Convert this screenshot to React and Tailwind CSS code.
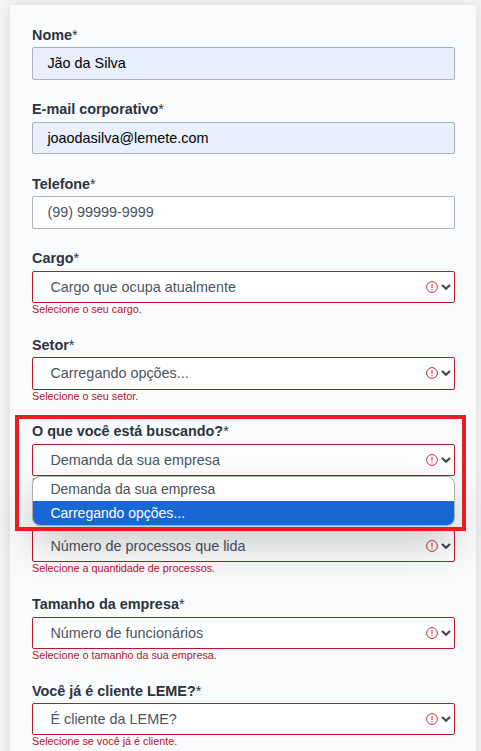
const fields = [
  { label: "Nome", value: "Jão da Silva", kind: "filled", row: "h-[75px]", head: "leading-5", box: "h-[33px]" },
  { label: "E-mail corporativo", value: "joaodasilva@lemete.com", kind: "filled", row: "h-[74px]", head: "leading-[18px]", box: "h-[32px] pt-px" },
  { label: "Telefone", value: "(99) 99999-9999", kind: "empty", row: "h-[75px]", head: "leading-5", box: "h-[33px]" },
  { label: "Cargo", value: "Cargo que ocupa atualmente", error: "Selecione o seu cargo.", row: "h-[86px]", head: "leading-[18px]", box: "h-[32px]", text: "pt-px" },
  { label: "Setor", value: "Carregando opções...", error: "Selecione o seu setor.", row: "h-[87px]", head: "leading-5", box: "h-[33px]", text: "", icons: "pb-px" },
  { label: "O que você está buscando?", value: "Demanda da sua empresa", error: "Selecione a sua demanda.", row: "h-[86px]", head: "leading-[18px]", box: "h-[32px]", text: "pt-px", open: true },
  { label: "Quantidade de processos", value: "Número de processos que lida", error: "Selecione a quantidade de processos.", row: "h-[87px]", head: "leading-5", box: "h-[32px]", text: "pt-px" },
  { label: "Tamanho da empresa", value: "Número de funcionários", error: "Selecione o tamanho da sua empresa.", row: "h-[86px]", head: "leading-[18px]", box: "h-[32px]", text: "pt-px" },
  { label: "Você já é cliente LEME?", value: "É cliente da LEME?", error: "Selecione se você já é cliente.", row: "h-[86px]", head: "leading-5", box: "h-[32px]", text: "pt-px" },
];

function SelectIcons({ className = "" }) {
  return (
    <div className={`flex items-center gap-[3px] ${className}`}>
      <svg width="12" height="12" viewBox="0 0 12 12" fill="none" stroke="#c5313f" className="shrink-0">
        <circle cx="6" cy="6" r="5.4" strokeWidth="1" />
        <path d="M6 2.8v4.2" strokeWidth="1.4" opacity="0.75" />
        <path d="M6 7.9v1.3" strokeWidth="1.4" opacity="0.75" />
      </svg>
      <svg width="10" height="8" viewBox="0 0 10 8" fill="none" stroke="#3e4853" className="shrink-0">
        <path d="M1 2l4 3.7 4-3.7" strokeWidth="2.2" />
      </svg>
    </div>
  );
}

function Options() {
  return (
    <div className="absolute left-0 top-[54px] z-10 h-[50px] w-[423px] overflow-hidden rounded-[8px] border border-[#adadad] bg-white text-[14px] leading-6 shadow-[0_18px_44px_rgba(0,0,0,0.23)]">
      <div className="h-6 pl-[17.4px] text-[#495057]">Demanda da sua empresa</div>
      <div className="h-6 bg-[#1967d2] pl-[17.4px] text-white">Carregando opções...</div>
    </div>
  );
}

function Field({ label, value, error, kind, row, head, box, text, icons, open }) {
  return (
    <div className={`relative shrink-0 ${row}`}>
      <div className={`h-[22px] whitespace-nowrap text-[14.4px] font-bold text-[#2b3440] ${head}`}>
        {label}
        <span className="font-normal">*</span>
      </div>
      {error ? (
        <>
          <div className={`flex items-center justify-between rounded-[2px] border border-[#b51a29] bg-white pl-[17.4px] pr-[3px] text-[14.4px] text-[#495562] ${box}`}>
            <span className={text}>{value}</span>
            <SelectIcons className={icons} />
          </div>
          <div className="text-[10.8px] leading-[13px] text-[#b5132b]">{error}</div>
        </>
      ) : (
        <div className={`flex items-center rounded-[2px] border border-[#abb0bd] pl-[14.4px] text-[14.4px] ${box} ${kind === "filled" ? "bg-[#e8effd] text-black" : "bg-white text-[#495562]"}`}>
          {value}
        </div>
      )}
      {open && <Options />}
    </div>
  );
}

export default function App() {
  return (
    <div className="relative h-[751px] w-[481px] overflow-hidden bg-[#f3f4f6] pl-[10px] pt-[5px] font-['Liberation_Sans',Arial,sans-serif]">
      <div className="flex h-[800px] w-[466px] flex-col bg-[#fafbfd] pl-[22px] pr-[21px] pt-5 shadow-[0_0_14px_rgba(0,0,0,0.1)]">
        {fields.map((f) => (
          <Field key={f.label} {...f} />
        ))}
      </div>
      <div className="absolute left-[15px] top-[415px] z-20 h-[116px] w-[451px] border-4 border-[#e71d1f]" />
    </div>
  );
}
